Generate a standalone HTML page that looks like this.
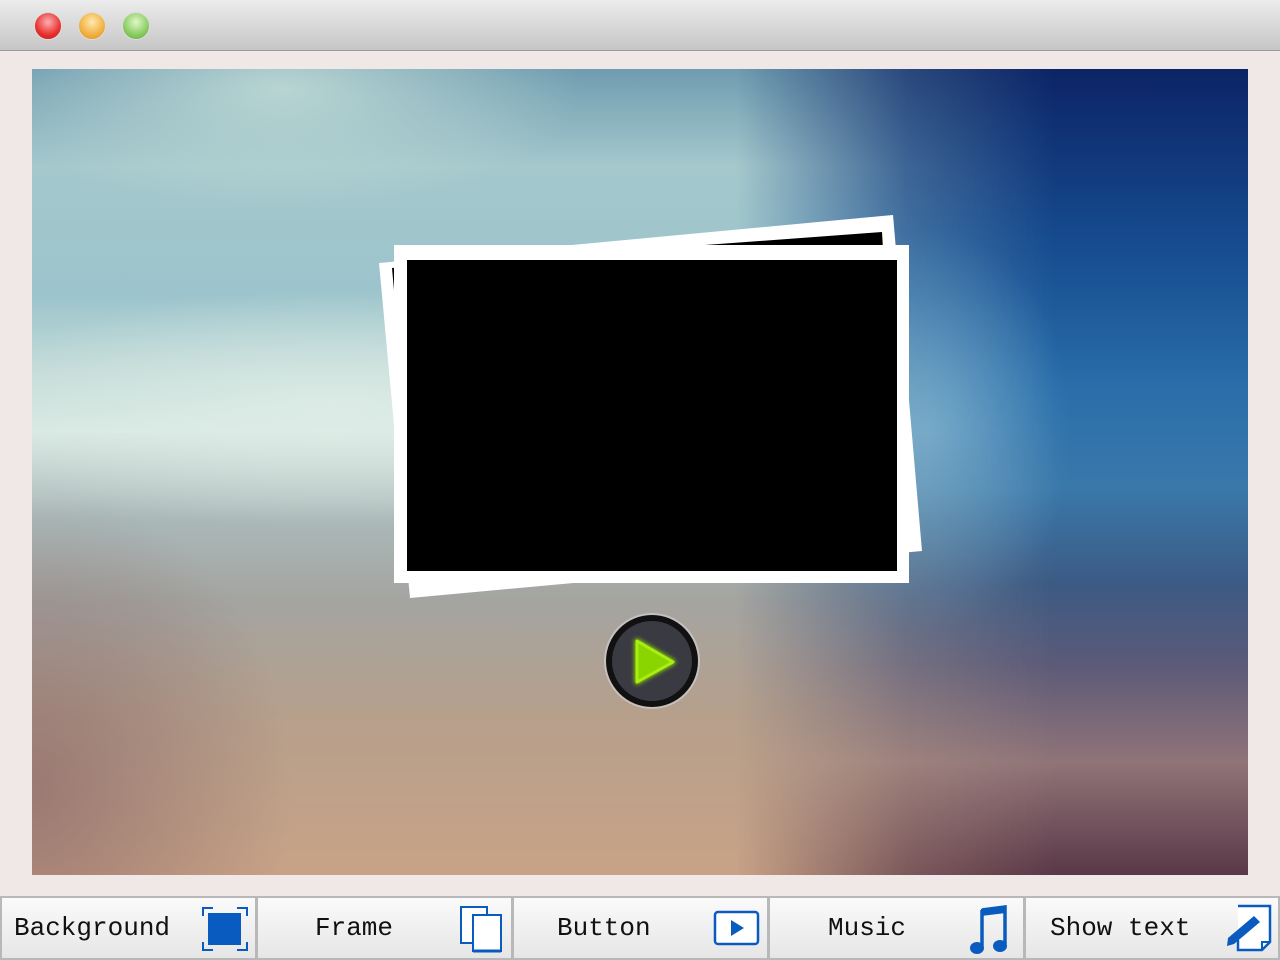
<!DOCTYPE html>
<html><head><meta charset="utf-8"><style>
*{margin:0;padding:0;box-sizing:border-box}
body{width:1280px;height:960px;overflow:hidden;background:#f0e8e6;position:relative;font-family:"Liberation Mono",monospace}
.top{position:absolute;left:0;top:0;width:1280px;height:51px;background:linear-gradient(#ececec,#c6c6c6);border-bottom:1px solid #9a9a9a}
.dot{position:absolute;top:12px;width:28px;height:28px;border-radius:50%;border:1px solid #ddd}
.stage{position:absolute;left:32px;top:69px;width:1216px;height:806px;overflow:hidden;
background:
radial-gradient(ellipse 300px 120px at 250px 20px,rgba(200,225,218,.8),rgba(200,225,218,0)),
radial-gradient(ellipse 260px 300px at 0px 720px,rgba(130,95,100,.6),rgba(130,95,100,0)),
radial-gradient(ellipse 380px 120px at 300px 340px,rgba(225,238,232,.7),rgba(225,238,232,0)),
linear-gradient(180deg,#6f9cb0 0%,#a4c8cc 12%,#9cc4cc 28%,#c4dcd8 38%,#d8e8e2 45%,#aab8b8 56%,#a4a4a0 66%,#b6a08c 80%,#c8a286 100%)}
.right{position:absolute;inset:0;
background:
radial-gradient(ellipse 140px 200px at 900px 360px,rgba(110,170,205,.6),rgba(110,170,205,0)),
linear-gradient(180deg,#0c2466 0%,#164c90 22%,#2a6eaa 40%,#3a78aa 52%,#3c5a84 64%,#5c5a78 74%,#907478 86%,#5a3848 100%);
-webkit-mask-image:linear-gradient(90deg,transparent 58%,rgba(0,0,0,.7) 72%,#000 84%);mask-image:linear-gradient(90deg,transparent 58%,rgba(0,0,0,.7) 72%,#000 84%)}
.tb{position:absolute;top:896px;height:64px;width:256px;border:2px solid #b8b8b8;border-right-width:1px;background:linear-gradient(#fafafa,#e6e6e6);font-size:26px;color:#111}
.tb span{position:absolute;top:15px}
.tb svg{position:absolute}
</style></head><body>
<div class="top">
<div class="dot" style="left:34px;background:radial-gradient(circle at 50% 35%,#ffb0b0,#e83030 60%,#c01818)"></div>
<div class="dot" style="left:78px;background:radial-gradient(circle at 50% 35%,#ffe8b0,#f0b040 60%,#d89020)"></div>
<div class="dot" style="left:122px;background:radial-gradient(circle at 50% 35%,#e0f8c8,#88cc60 60%,#60a840)"></div>
</div>
<div class="stage"><div class="right"></div></div>
<svg width="1280" height="960" style="position:absolute;left:0;top:0">
<defs><filter id="g" x="-50%" y="-50%" width="200%" height="200%"><feGaussianBlur stdDeviation="2"/></filter></defs>
<polygon points="379,263 893,215 922,551 410,598" fill="#fff"/>
<polygon points="392,268 882,232 900,540 420,580" fill="#000"/>
<rect x="394" y="245" width="515" height="338" fill="#fff"/>
<rect x="407" y="260" width="490" height="311" fill="#000"/>
<circle cx="652" cy="661" r="48" fill="#dde" opacity=".5"/>
<circle cx="652" cy="661" r="46" fill="#111"/>
<circle cx="652" cy="661" r="40" fill="#3a3a42"/>
<path d="M637 641 L673 662 L637 682 Z" fill="#9be000" stroke="#8ad400" stroke-width="5" stroke-linejoin="round" filter="url(#g)"/>
<path d="M637 641 L673 662 L637 682 Z" fill="#8ad400" stroke="#a8ee10" stroke-width="3" stroke-linejoin="round"/>
</svg>
<div class="tb" style="left:0"><span style="left:12px">Background</span>
<svg style="left:199px;top:8px" width="48" height="46"><path d="M2 10V2h10M36 2h10v8M2 36v8h10M36 44h10v-8" fill="none" stroke="#0a5bc0" stroke-width="2"/><rect x="7" y="7" width="33" height="32" fill="#0a5bc0"/></svg></div>
<div class="tb" style="left:256px"><span style="left:57px">Frame</span>
<svg style="left:202px;top:8px" width="44" height="48"><rect x="1" y="1" width="26" height="36" fill="#fff" stroke="#0a5bc0" stroke-width="2"/><rect x="13" y="9" width="28" height="36" fill="#fff" stroke="#0a5bc0" stroke-width="2"/><line x1="13" y1="45" x2="41" y2="45" stroke="#0a5bc0" stroke-width="3"/></svg></div>
<div class="tb" style="left:512px"><span style="left:43px">Button</span>
<svg style="left:199px;top:12px" width="48" height="36"><rect x="2" y="2" width="43" height="32" rx="3" fill="#fff" stroke="#0a5bc0" stroke-width="2.5"/><path d="M18 10 L31 18 L18 26Z" fill="#0a5bc0"/></svg></div>
<div class="tb" style="left:768px"><span style="left:58px">Music</span>
<svg style="left:198px;top:6px" width="44" height="50"><path d="M14 6 L37 3 V40 M14 6 V42" fill="none" stroke="#0a5bc0" stroke-width="3.5"/><path d="M13 5 L38 2 V9 L13 12Z" fill="#0a5bc0"/><ellipse cx="9" cy="44" rx="7" ry="6" fill="#0a5bc0"/><ellipse cx="32" cy="42" rx="7" ry="6" fill="#0a5bc0"/></svg></div>
<div class="tb" style="left:1024px;border-right-width:2px"><span style="left:24px">Show text</span>
<svg style="left:198px;top:6px" width="50" height="50"><path d="M14 2 H46 V38 L38 46 H14 V36" fill="#fff" stroke="#0a5bc0" stroke-width="2.5"/><path d="M38 46 V38 H46" fill="none" stroke="#0a5bc0" stroke-width="2"/><path d="M4 34 L30 12 L36 18 L10 40 L3 42Z" fill="#0a5bc0"/></svg></div>
</body></html>
